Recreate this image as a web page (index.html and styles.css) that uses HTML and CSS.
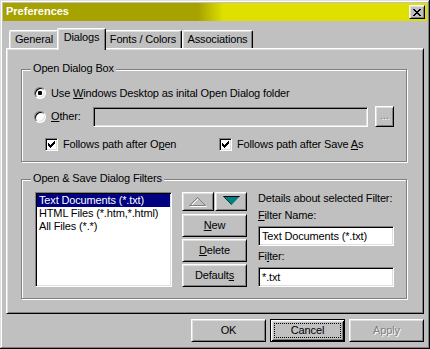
FILE: index.html
```html
<!DOCTYPE html>
<html lang="en">
<head>
  <meta charset="UTF-8" />
  <meta name="viewport" content="width=device-width, initial-scale=1.0"/>
  <title>Preferences</title>
  <link rel="stylesheet" href="styles.css">
</head>
<body>
  <div class="window">
    <div class="titlebar">
      <span class="title">Preferences</span>
      <button class="btn close-btn" title="Close">
        <svg width="8" height="7" viewBox="0 0 8 7" shape-rendering="crispEdges">
          <path d="M0 0h2v1h-2zM6 0h2v1h-2zM1 1h2v1h-2zM5 1h2v1h-2zM2 2h4v1h-4zM3 3h2v1h-2zM2 4h4v1h-4zM1 5h2v1h-2zM5 5h2v1h-2zM0 6h2v1h-2zM6 6h2v1h-2z" fill="#000"/>
        </svg>
      </button>
    </div>

    <div class="tabs">
      <div class="tab tab-general">General</div>
      <div class="tab tab-dialogs active">Dialogs</div>
      <div class="tab tab-fonts">Fonts / Colors</div>
      <div class="tab tab-assoc">Associations</div>
    </div>

    <div class="panel">
      <div class="group group-open">
        <div class="group-title">Open Dialog Box</div>

        <div class="option opt-desktop">
          <span class="radio checked"></span>
          <span>Use <u>W</u>indows Desktop as inital Open Dialog folder</span>
        </div>

        <div class="option opt-other">
          <span class="radio"></span>
          <span class="other-label"><u>O</u>ther:</span>
          <div class="textbox disabled other-path"></div>
          <button class="btn browse-btn disabled">...</button>
        </div>

        <div class="checks">
          <div class="option check-open">
            <span class="checkbox">
              <svg width="7" height="7" viewBox="0 0 7 7" shape-rendering="crispEdges">
                <path d="M6 0h1v1h-1zM5 1h2v1h-2zM0 2h1v1h-1zM4 2h3v1h-3zM0 3h2v1h-2zM3 3h3v1h-3zM0 4h5v1h-5zM1 5h3v1h-3zM2 6h1v1h-1z" fill="#000"/>
              </svg>
            </span>
            <span>Follows path after O<u>p</u>en</span>
          </div>
          <div class="option">
            <span class="checkbox">
              <svg width="7" height="7" viewBox="0 0 7 7" shape-rendering="crispEdges">
                <path d="M6 0h1v1h-1zM5 1h2v1h-2zM0 2h1v1h-1zM4 2h3v1h-3zM0 3h2v1h-2zM3 3h3v1h-3zM0 4h5v1h-5zM1 5h3v1h-3zM2 6h1v1h-1z" fill="#000"/>
              </svg>
            </span>
            <span>Follows path after Save <u>A</u>s</span>
          </div>
        </div>
      </div>

      <div class="group group-filters">
        <div class="group-title">Open &amp; Save Dialog Filters</div>

        <div class="filters-body">
          <div class="listbox">
            <div class="list-item selected">Text Documents (*.txt)</div>
            <div class="list-item">HTML Files (*.htm,*.html)</div>
            <div class="list-item">All Files (*.*)</div>
          </div>

          <div class="filter-buttons">
            <div class="arrow-row">
              <button class="btn arrow-btn" title="Move up">
                <svg width="18" height="10" viewBox="0 0 18 10">
                  <polygon points="1.5,9.5 9.5,1.5 17.5,9.5" fill="none" stroke="#fff"/>
                  <polygon points="0.5,8.5 8.5,0.5 16.5,8.5" fill="none" stroke="#808080"/>
                </svg>
              </button>
              <button class="btn arrow-btn arrow-down" title="Move down">
                <svg width="17" height="9" viewBox="0 0 17 9">
                  <polygon points="0,0 17,0 8.5,9" fill="#008080"/>
                  <polyline points="0.5,0.5 16.5,0.5" fill="none" stroke="#000"/>
                  <polyline points="0.5,0.5 8.5,8.5" fill="none" stroke="#004040"/>
                </svg>
              </button>
            </div>
            <button class="btn action-btn"><span><u>N</u>ew</span></button>
            <button class="btn action-btn"><span><u>D</u>elete</span></button>
            <button class="btn action-btn"><span>Default<u>s</u></span></button>
          </div>

          <div class="filter-details">
            <div>Details about selected Filter:</div>
            <div class="field-label"><u>F</u>ilter Name:</div>
            <div class="textbox">Text Documents (*.txt)</div>
            <div class="field-label">Fi<u>l</u>ter:</div>
            <div class="textbox">*.txt</div>
          </div>
        </div>
      </div>
    </div>

    <div class="dialog-buttons">
      <button class="btn dlg-btn">OK</button>
      <button class="btn dlg-btn default"><span class="focus">Cancel</span></button>
      <button class="btn dlg-btn disabled">Apply</button>
    </div>
  </div>
</body>
</html>
```

FILE: styles.css
```css
body {
  margin: 0;
  background: #c0c0c0;
  font-family: "Liberation Sans", Arial, sans-serif;
  font-size: 11px;
  line-height: 13px;
  letter-spacing: -0.15px;
  color: #000;
}

u {
  text-underline-offset: 1px;
}

.window {
  width: 430px;
  height: 349px;
  box-sizing: border-box;
  padding: 3px;
  background: #c0c0c0;
  box-shadow: inset -1px -1px #000, inset 1px 1px #dfdfdf,
              inset -2px -2px #808080, inset 2px 2px #fff;
}

/* title bar */
.titlebar {
  height: 18px;
  display: flex;
  align-items: center;
  justify-content: space-between;
  padding: 0 2px 0 3px;
  background: linear-gradient(to right, #a6a200 46%, #e0e000 52%);
}

.title {
  color: #fff;
  font-weight: bold;
  letter-spacing: 0;
  margin-top: -1px;
}

/* generic 3D button */
.btn {
  box-sizing: border-box;
  border: 1px solid;
  border-color: #fff #000 #000 #fff;
  box-shadow: inset 1px 1px #dfdfdf, inset -1px -1px #808080;
  background: #c0c0c0;
  font: inherit;
  letter-spacing: inherit;
  color: #000;
  padding: 0;
  display: flex;
  align-items: center;
  justify-content: center;
}

.btn.disabled {
  color: #808080;
  text-shadow: 1px 1px #fff;
}

.close-btn {
  width: 16px;
  height: 14px;
}

/* tabs */
.tabs {
  display: flex;
  align-items: flex-end;
  height: 20px;
  margin-top: 7px;
  padding-left: 6px;
}

.tab {
  height: 18px;
  box-sizing: border-box;
  padding-top: 2px;
  text-align: center;
  border: 1px solid #fff;
  border-bottom: 0;
  border-right-color: #000;
  border-radius: 2px 2px 0 0;
  box-shadow: inset -1px 0 #808080, inset 1px 1px #dfdfdf;
  background: #c0c0c0;
}

.tab-general { width: 50px; }
.tab-dialogs { width: 45px; }
.tab-fonts { width: 78px; }
.tab-assoc { width: 71px; }

.tab.active {
  width: 49px;
  height: 22px;
  margin: 0 -2px -2px;
  position: relative;
  z-index: 1;
}

/* tab page */
.panel {
  height: 266px;
  margin: 0 3px;
  box-sizing: border-box;
  border: 1px solid;
  border-color: #fff #000 #000 #fff;
  box-shadow: inset 1px 1px #dfdfdf, inset -1px -1px #808080;
  padding: 20px 0 0 14px;
}

.group {
  width: 386px;
  box-sizing: border-box;
  border: 1px solid #808080;
  box-shadow: inset 1px 1px #fff, 1px 1px #fff;
}

.group-title {
  width: max-content;
  margin: -8px 0 0 9px;
  padding: 0 2px;
  background: #c0c0c0;
}

.group-open {
  padding-bottom: 10px;
}

.group-filters {
  margin-top: 17px;
  padding-bottom: 11px;
}

.option {
  display: flex;
  align-items: center;
  gap: 5px;
  white-space: nowrap;
}

.opt-desktop {
  height: 12px;
  margin-top: 12px;
  padding-left: 12px;
}

.opt-other {
  height: 21px;
  margin-top: 7px;
  padding-left: 12px;
  gap: 0;
}

.opt-other .radio {
  margin-right: 5px;
}

.other-label {
  width: 42px;
}

.other-path {
  width: 275px;
  height: 21px;
}

.browse-btn {
  width: 19px;
  height: 21px;
  margin-left: 7px;
  padding-bottom: 3px;
}

.checks {
  display: flex;
  margin-top: 11px;
  padding-left: 23px;
}

.check-open {
  width: 174px;
}

.radio {
  width: 12px;
  height: 12px;
  flex: none;
  box-sizing: border-box;
  border-radius: 50%;
  border: 1px solid;
  border-color: #808080 #fff #fff #808080;
  box-shadow: inset 1px 1px #000, inset -1px -1px #dfdfdf;
  background: #fff;
  display: flex;
  align-items: center;
  justify-content: center;
}

.radio.checked::after {
  content: "";
  width: 4px;
  height: 4px;
  border-radius: 1px;
  background: #000;
}

.checkbox {
  width: 13px;
  height: 13px;
  flex: none;
  box-sizing: border-box;
  border: 1px solid;
  border-color: #808080 #fff #fff #808080;
  box-shadow: inset 1px 1px #000, inset -1px -1px #dfdfdf;
  background: #fff;
  display: flex;
  align-items: center;
  justify-content: center;
}

.textbox {
  height: 20px;
  box-sizing: border-box;
  border: 1px solid;
  border-color: #808080 #fff #fff #808080;
  box-shadow: inset 1px 1px #000, inset -1px -1px #dfdfdf;
  background: #fff;
  padding: 0 3px;
  display: flex;
  align-items: center;
  white-space: nowrap;
}

.textbox.disabled {
  background: #c0c0c0;
}

/* filters */
.filters-body {
  display: flex;
  margin: 7px 0 0 13px;
}

.listbox {
  width: 137px;
  height: 95px;
  box-sizing: border-box;
  border: 1px solid;
  border-color: #808080 #fff #fff #808080;
  box-shadow: inset 1px 1px #000, inset -1px -1px #dfdfdf;
  background: #fff;
  padding: 1px;
}

.list-item {
  padding-left: 2px;
  white-space: nowrap;
}

.list-item.selected {
  background: #000080;
  color: #fff;
}

.filter-buttons {
  width: 65px;
  margin-left: 10px;
  display: flex;
  flex-direction: column;
  gap: 2px;
}

.arrow-row {
  display: flex;
  gap: 1px;
  margin-bottom: 1px;
}

.arrow-btn {
  width: 32px;
  height: 19px;
}

.arrow-down {
  padding-bottom: 3px;
}

.action-btn {
  height: 23px;
}

.filter-details {
  width: 136px;
  margin-left: 11px;
  display: flex;
  flex-direction: column;
  white-space: nowrap;
}

.field-label {
  margin: 4px 0;
}

/* dialog buttons */
.dialog-buttons {
  display: flex;
  justify-content: flex-end;
  gap: 4px;
  margin-top: 5px;
  padding-right: 3px;
}

.dlg-btn {
  width: 75px;
  height: 23px;
}

.dlg-btn.default {
  border-color: #000;
  box-shadow: inset 1px 1px #fff, inset -1px -1px #000,
              inset 2px 2px #dfdfdf, inset -2px -2px #808080;
  align-items: stretch;
}

.focus {
  flex: 1;
  margin: 3px;
  border: 1px dotted #000;
  display: flex;
  align-items: center;
  justify-content: center;
}
```
